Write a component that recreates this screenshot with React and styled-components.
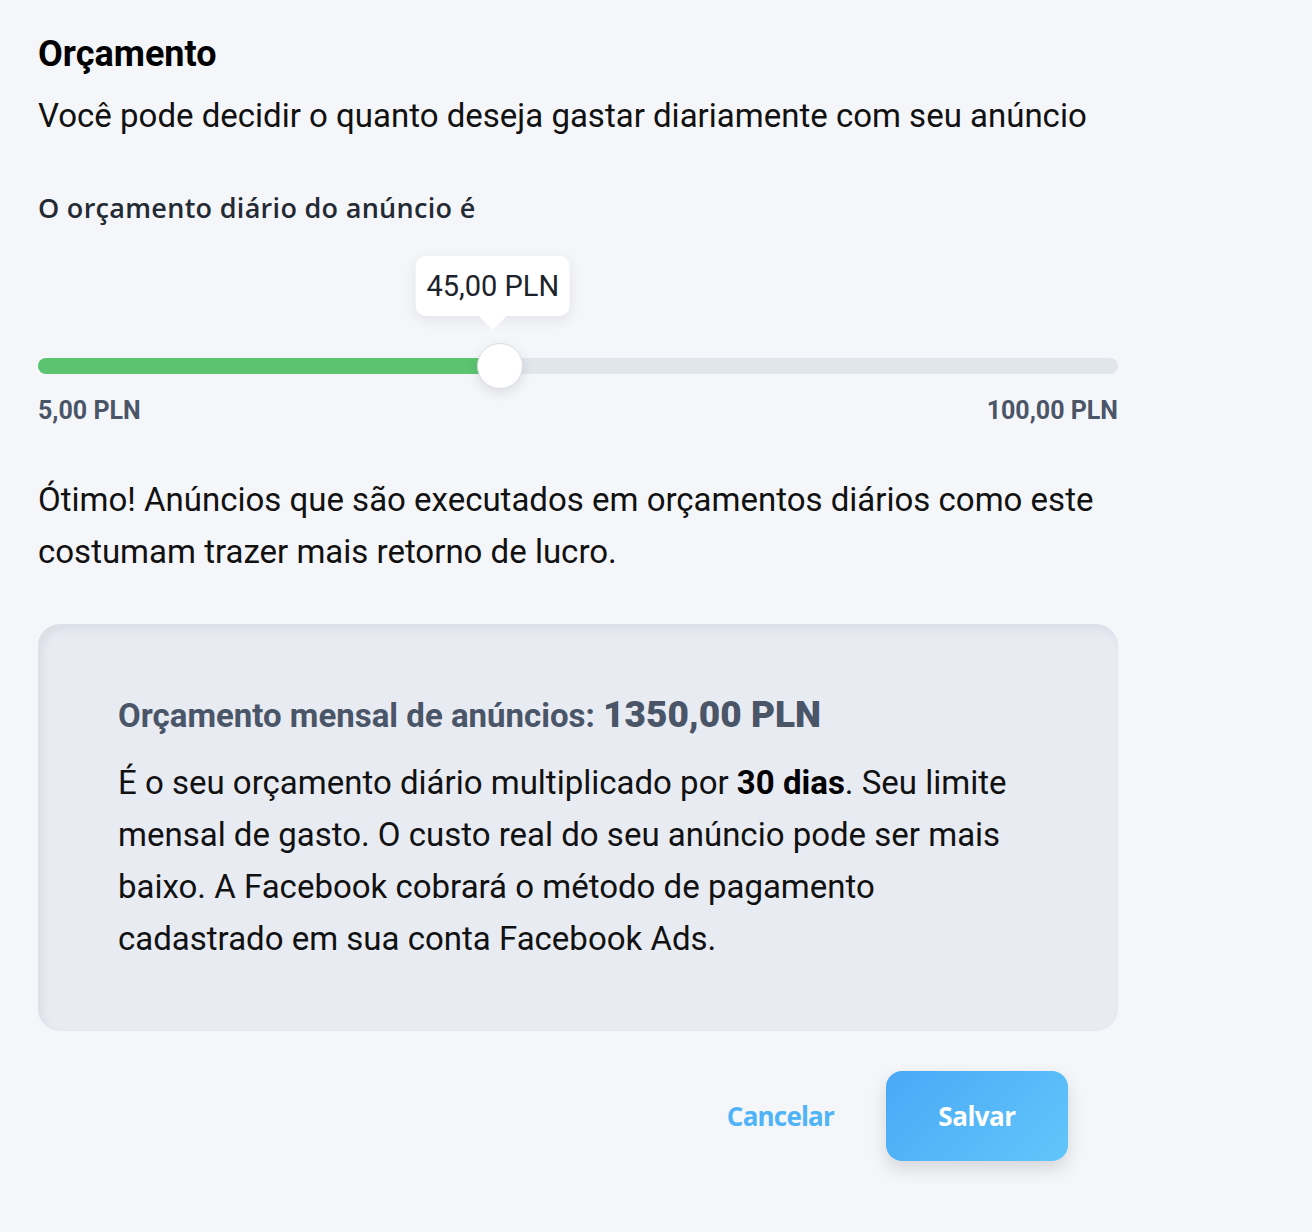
import React from "react";
import styled, { createGlobalStyle } from "styled-components";

const GlobalStyle = createGlobalStyle`
  html, body {
    margin: 0;
    padding: 0;
    background: #f5f6fa;
    font-family: Roboto, "Liberation Sans", sans-serif;
    color: #111;
  }
`;

const Page = styled.div`
  width: 1080px;
  padding: 30px 0 60px 38px;
`;

const Title = styled.h1`
  margin: 0;
  font-size: 36px;
  line-height: 48px;
  font-weight: 700;
  color: #000;
`;

const Lead = styled.p`
  margin: 12px 0 0;
  font-size: 33px;
  line-height: 52px;
  color: #111;
`;

const Label = styled.div`
  margin-top: 50px;
  font-family: "Open Sans", "Noto Sans", sans-serif;
  font-weight: 600;
  font-size: 27px;
  line-height: 32px;
  letter-spacing: 0.3px;
  color: #232a34;
`;

const SliderWrap = styled.div`
  position: relative;
  margin-top: 134px;
  height: 16px;
`;

const Track = styled.div`
  height: 16px;
  border-radius: 8px;
  background: #e1e5ec;
  overflow: hidden;
`;

const Fill = styled.div`
  height: 100%;
  background: #5bc470;
`;

const Thumb = styled.div`
  position: absolute;
  top: 50%;
  width: 44px;
  height: 44px;
  border-radius: 50%;
  background: #fff;
  border: 1px solid #dadde3;
  transform: translate(-50%, -50%);
  box-shadow: 0 4px 12px rgba(0, 0, 0, 0.1);
`;

const Tip = styled.div`
  position: absolute;
  bottom: 58px;
  transform: translateX(-50%);
  padding: 0 11px;
  height: 60px;
  display: flex;
  align-items: center;
  background: #fff;
  border-radius: 10px;
  box-shadow: 0 4px 14px rgba(0, 0, 0, 0.08);
  font-size: 29px;
  color: #1d232b;
  white-space: nowrap;

  &::after {
    content: "";
    position: absolute;
    left: 50%;
    bottom: -14px;
    margin-left: -15px;
    border-left: 15px solid transparent;
    border-right: 15px solid transparent;
    border-top: 15px solid #fff;
  }
`;

const Range = styled.div`
  display: flex;
  justify-content: space-between;
  margin-top: 22px;
  font-size: 25px;
  font-weight: 700;
  line-height: 30px;
  color: #4a5568;
`;

const Note = styled.p`
  margin: 48px 0 0;
  font-size: 33px;
  line-height: 52px;
  color: #111;
`;

const Card = styled.div`
  margin-top: 46px;
  padding: 65px 80px 66px;
  border-radius: 22px;
  background: #e8ebf2;
  box-shadow: inset 4px 5px 10px rgba(30, 40, 60, 0.07);
`;

const CardTitle = styled.div`
  font-size: 33px;
  font-weight: 700;
  line-height: 52px;
  color: #4a5568;

  b {
    font-size: 37px;
  }
`;

const CardText = styled.p`
  margin: 15px 0 0;
  font-size: 33px;
  line-height: 52px;
  color: #111;

  b {
    font-weight: 700;
    color: #000;
  }
`;

const Actions = styled.div`
  display: flex;
  justify-content: flex-end;
  align-items: center;
  gap: 52px;
  margin-top: 40px;
  padding-right: 50px;
`;

const TextButton = styled.button`
  border: 0;
  background: none;
  padding: 0;
  font-family: "Open Sans", "Noto Sans", sans-serif;
  font-weight: 700;
  font-size: 26px;
  letter-spacing: -0.8px;
  color: #4fb4f7;
  cursor: pointer;
`;

const PrimaryButton = styled.button`
  width: 182px;
  height: 90px;
  border: 0;
  border-radius: 16px;
  background: linear-gradient(135deg, #4aa8f6 0%, #62c6fa 100%);
  box-shadow: 0 8px 18px rgba(0, 0, 0, 0.13);
  font-family: "Open Sans", "Noto Sans", sans-serif;
  font-weight: 700;
  font-size: 26px;
  letter-spacing: -0.5px;
  color: #fff;
  cursor: pointer;
`;

const min = 5;
const max = 100;
const value = 45;

export default function App() {
  const pct = ((value - min) / (max - min)) * 100;
  return (
    <>
      <GlobalStyle />
      <Page>
        <Title>Orçamento</Title>
        <Lead>Você pode decidir o quanto deseja gastar diariamente com seu anúncio</Lead>
        <Label>O orçamento diário do anúncio é</Label>
        <SliderWrap>
          <Track>
            <Fill style={{ width: `${pct}%` }} />
          </Track>
          <Tip style={{ left: `${pct}%` }}>45,00 PLN</Tip>
          <Thumb style={{ left: `calc(${pct}% + 7px)` }} />
        </SliderWrap>
        <Range>
          <span>5,00 PLN</span>
          <span>100,00 PLN</span>
        </Range>
        <Note>
          Ótimo! Anúncios que são executados em orçamentos diários como este
          costumam trazer mais retorno de lucro.
        </Note>
        <Card>
          <CardTitle>
            Orçamento mensal de anúncios: <b>1350,00 PLN</b>
          </CardTitle>
          <CardText>
            É o seu orçamento diário multiplicado por <b>30 dias</b>. Seu limite
            mensal de gasto. O custo real do seu anúncio pode ser mais baixo. A
            Facebook cobrará o método de pagamento cadastrado em sua conta
            Facebook Ads.
          </CardText>
        </Card>
        <Actions>
          <TextButton>Cancelar</TextButton>
          <PrimaryButton>Salvar</PrimaryButton>
        </Actions>
      </Page>
    </>
  );
}
